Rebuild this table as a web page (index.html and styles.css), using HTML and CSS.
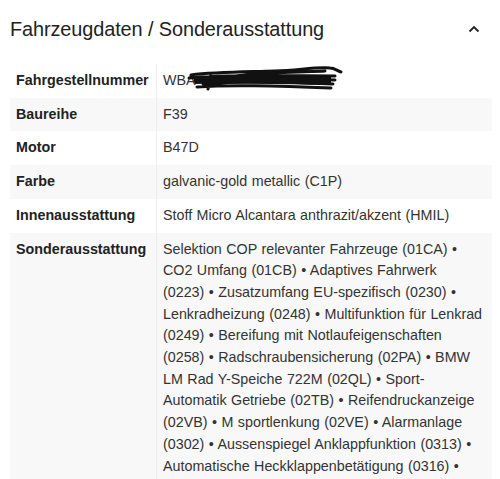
FILE: index.html
```html
<!DOCTYPE html>
<html lang="de">
<head>
<meta charset="utf-8">
<link rel="stylesheet" href="styles.css">
</head>
<body>
<div class="panel">
  <div class="header">
    <h2 class="title">Fahrzeugdaten / Sonderausstattung</h2>
    <svg class="chev" width="12" height="8" viewBox="0 0 12 8"><path d="M1.5 6.5 L6 2 L10.5 6.5" fill="none" stroke="#222" stroke-width="1.8"/></svg>
  </div>
  <div class="table">
    <div class="row">
      <div class="label">Fahrgestellnummer</div>
      <div class="value vin">WBA<span class="redact"><svg width="160" height="30" viewBox="0 0 160 30"><path d="M6 12 C30 9 60 9 90 8 C115 7 130 4 145 5 C150 5 152 8 156 9 M4 15 C40 12 95 12 150 13 M10 18 C50 15 105 16 150 17 M18 21 C55 18 110 19 148 21 M12 24 C50 21 100 23 146 25 M26 11 L23 26 M50 13 C80 9 120 9 140 8" fill="none" stroke="#111" stroke-width="3" stroke-linecap="round"/><path d="M8 14 C50 12 100 13 146 14 L146 22 C100 21 50 20 10 21 Z" fill="#111"/></svg></span></div>
    </div>
    <div class="row alt">
      <div class="label">Baureihe</div>
      <div class="value">F39</div>
    </div>
    <div class="row">
      <div class="label">Motor</div>
      <div class="value">B47D</div>
    </div>
    <div class="row alt">
      <div class="label">Farbe</div>
      <div class="value">galvanic-gold metallic (C1P)</div>
    </div>
    <div class="row">
      <div class="label">Innenausstattung</div>
      <div class="value">Stoff Micro Alcantara anthrazit/akzent (HMIL)</div>
    </div>
    <div class="row alt">
      <div class="label">Sonderausstattung</div>
      <div class="value list">Selektion COP relevanter Fahrzeuge (01CA) • CO2 Umfang (01CB) • Adaptives Fahrwerk<br>(0223) • Zusatzumfang EU-spezifisch (0230) • Lenkradheizung (0248) • Multifunktion für Lenkrad (0249) • Bereifung mit Notlaufeigenschaften (0258) • Radschraubensicherung (02PA) • BMW LM Rad Y-Speiche 722M (02QL) • Sport-Automatik Getriebe (02TB) • Reifendruckanzeige (02VB) • M sportlenkung (02VE) • Alarmanlage (0302) • Aussenspiegel Anklappfunktion (0313) • Automatische Heckklappenbetätigung (0316) • Komfortzugang (0322) • Sitzheizung für Fahrer und Beifahrer (0494)</div>
    </div>
  </div>
</div>
</body>
</html>
```
FILE: styles.css
```css
html, body {
  margin: 0;
  padding: 0;
  background: #ffffff;
  overflow: hidden;
}
body {
  font-family: "Liberation Sans", Arial, sans-serif;
  color: #2a2a2a;
}
.panel {
  padding: 0 8px 0 10px;
}
.header {
  display: flex;
  align-items: center;
  justify-content: space-between;
  height: 58px;
}
.title {
  margin: 0;
  font-size: 19.9px;
  font-weight: normal;
  color: #222;
  letter-spacing: -0.1px;
}
.chev {
  margin-right: 12px;
}
.table {
  margin-top: 6px;
}
.row {
  display: grid;
  grid-template-columns: 147px 1fr;
  background: #fff;
}
.row.alt {
  background: #f8f8f8;
}
.label {
  font-weight: bold;
  font-size: 14.3px;
  line-height: 21.7px;
  padding: 6px 6px;
  color: #222;
  border-right: 1px solid #eeeeee;
}
.value {
  font-size: 14.3px;
  line-height: 21.7px;
  padding: 6px 8px 6px 6px;
  color: #333;
  word-spacing: 0.5px;
}
.list {
  padding-right: 9.3px;
}
.vin {
  position: relative;
}
.redact {
  position: absolute;
  left: 28px;
  top: -1px;
}
```
